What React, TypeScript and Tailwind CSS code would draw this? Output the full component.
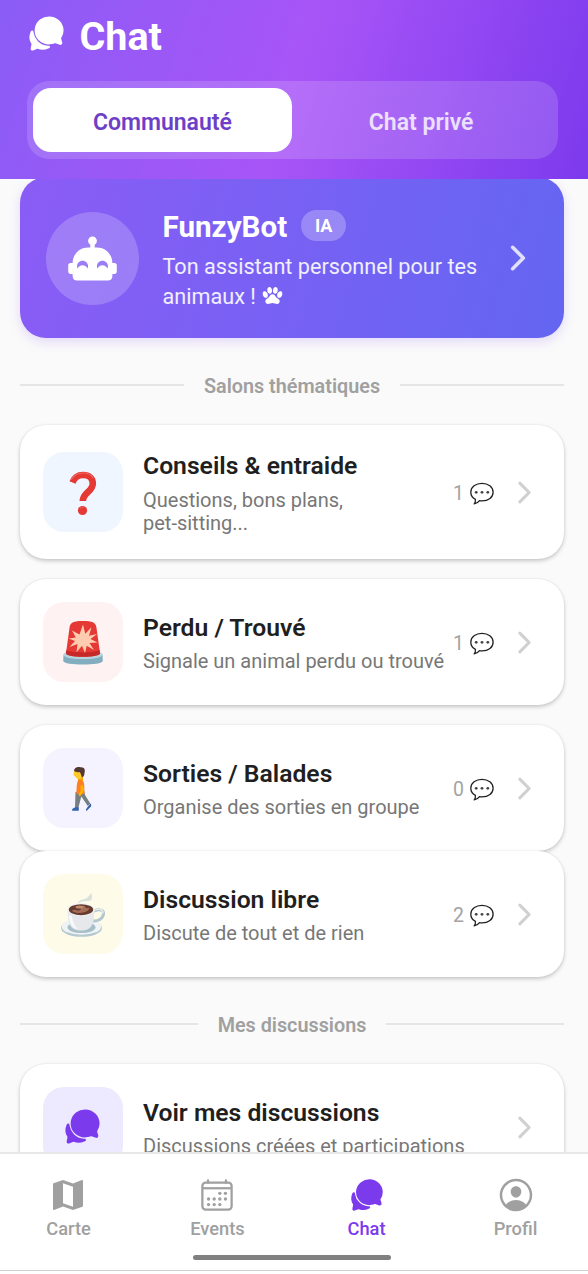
import React, { useState } from "react";
import {
  IoCalendarOutline,
  IoChatbubbles,
  IoChevronForward,
  IoPaw,
  IoPersonCircleOutline,
} from "react-icons/io5";
import { MdMap } from "react-icons/md";

const RobotIcon: React.FC = () => (
  <svg viewBox="0 0 24 24" width="53" height="53" fill="currentColor">
    <path d="M22 14H21C21 10.13 17.87 7 14 7H13V5.73C13.6 5.39 14 4.74 14 4C14 2.9 13.11 2 12 2S10 2.9 10 4C10 4.74 10.4 5.39 11 5.73V7H10C6.13 7 3 10.13 3 14H2C1.45 14 1 14.45 1 15V18C1 18.55 1.45 19 2 19H3V20C3 21.11 3.9 22 5 22H19C20.11 22 21 21.11 21 20V19H22C22.55 19 23 18.55 23 18V15C23 14.45 22.55 14 22 14M9.79 16.5C9.4 15.62 8.53 15 7.5 15S5.6 15.62 5.21 16.5C5.08 16.19 5 15.86 5 15.5C5 14.12 6.12 13 7.5 13S10 14.12 10 15.5C10 15.86 9.92 16.19 9.79 16.5M18.79 16.5C18.4 15.62 17.5 15 16.5 15S14.6 15.62 14.21 16.5C14.08 16.19 14 15.86 14 15.5C14 14.12 15.12 13 16.5 13S19 14.12 19 15.5C19 15.86 18.92 16.19 18.79 16.5Z" />
  </svg>
);

const QuestionIcon: React.FC = () => (
  <svg viewBox="0 0 46 46" width="46" height="46" fill="none">
    <path
      d="M12.500 12.500C14.500 7 18.500 5 23.200 5c6 0 9.600 3.500 9.600 8.500 0 8.500-9.800 8.500-10 17.500"
      stroke="#e53935"
      strokeWidth="6.600"
    />
    <path d="M11.500 9.300C14.500 4.500 18.500 3 23 3c4.500 0 8 1.500 9.800 4.500" stroke="#f2685f" strokeWidth="1.200" strokeLinecap="round" />
    <circle cx="22.500" cy="40.500" r="4.600" fill="#e53935" />
    <path d="M20.200 38.200a3.500 3.500 0 0 1 3-1.200" stroke="#f2685f" strokeWidth="1" strokeLinecap="round" />
  </svg>
);

const SirenIcon: React.FC = () => (
  <svg viewBox="0 0 46 46" width="46" height="46">
    <path d="M3.500 34.500c6-2 33-2 39 0l.3 6.500c-.3 4.800-39.300 4.800-39.600 0z" fill="#82aec0" />
    <path d="M3.500 34.500c0-2.500 5-3.500 19.500-3.500s19.500 1 19.500 3.500S37 39 23 39 3.500 37 3.500 34.500z" fill="#b9d3dc" />
    <path d="M9.500 8C10 2 14 1 23 1s13 1 13.500 7L40 33c0 2.500-7 3.700-17 3.700S6 35.500 6 33z" fill="#e53935" />
    <path d="M6.500 30L6 33c0 2.500 7 3.700 17 3.700S40 35.500 40 33l-.5-3c-3 3-30 3-33 0z" fill="#c62828" />
    <path
      d="M23 4.500l2.300 9.300 6.200-6.500-2.500 8.500 8-1.700-6.500 5 7 3.400-8 .4 4.500 7-7.300-4.200L25 33l-3-7.200-5.500 6.500 1-8.300-8 3 5.500-6-6.500-2.500 7.300-1L12 10.500l7.500 4z"
      fill="#ffccb0"
    />
  </svg>
);

const WalkingIcon: React.FC = () => (
  <svg viewBox="0 0 46 46" width="46" height="46">
    <path d="M15.500 26l-.5 16h3.300l3-11.500 6.500 9.500 2.500-2.500L25 29l-1-5z" fill="#757f82" />
    <path d="M15 41.300h3.800v3.500h-6.500c-.8-2 1.200-2.400 2.700-3.500z" fill="#3464ae" />
    <path d="M28 40.500l2.500-3c1 1.200.8 2 .5 3L26.500 45c-1.300-1-.2-2.200 1.500-4.500z" fill="#3464ae" />
    <path d="M18 11h5v5h-5z" fill="#f2a600" />
    <path d="M14 4.500h7.500v7.700c-2 1.300-4.800 1-5.700-1L13.500 9z" fill="#ffca28" />
    <path d="M14 4.800c0-3.500 4-4.500 6.500-3.500 4-.5 5 2.700 4 5.700 0 2.700-1.300 4.300-2.800 4.300l-1-3.500-1-1.800c-2 .5-4.200.3-5.700-1.200z" fill="#543930" />
    <path d="M18 14.200c4-1.400 6.200 1 6.200 4.800L24.500 28h-8c0-5-.2-9.500 1.500-13.800z" fill="#ff7f22" />
    <path d="M20.500 19.500h2.700l.6 5.500-3.600 5.200-1.800-1 2.200-4.400z" fill="#ffb300" />
  </svg>
);

const CoffeeIcon: React.FC = () => (
  <svg viewBox="0 0 46 46" width="46" height="46">
    <path d="M17.500 11.500c2-5 7.500-3.300 10-6 1.500-1.700 2.500-3 4-4.500.5 4.500 1.500 7-2.500 7.800-4 .8-6.500-.3-11.500 2.700z" fill="#cdd9dd" opacity=".8" />
    <ellipse cx="21.500" cy="36" rx="20.500" ry="8.800" fill="#b6c9d0" />
    <ellipse cx="21.500" cy="34.700" rx="19.800" ry="8" fill="#eef3f5" />
    <ellipse cx="21.500" cy="35.500" rx="14" ry="5.500" fill="#a9bfc8" />
    <path d="M34 19c6-2.500 10-1 9.500 3S39 29.500 32 29" fill="none" stroke="#b4c7ce" strokeWidth="3" />
    <path d="M34 18.500c6-2.500 9.500-1 9 3" fill="none" stroke="#edf2f4" strokeWidth="1.200" />
    <path d="M7.500 17.500C8 30 9 38.500 21 38.500S34 30 34.500 17.500z" fill="#e6e8ec" />
    <path d="M9 23c.7 8 3 13 9 14-4-3-5.500-8-6-13z" fill="#fafbfc" />
    <ellipse cx="21" cy="17.500" rx="13.500" ry="6.500" fill="#f2f4f5" />
    <ellipse cx="21" cy="17.700" rx="12.200" ry="5.500" fill="#673b30" />
    <path d="M12 19c3-3 5 1 8-1s-2-3 2-4 3 3 6 2 1 3-3 4-8 2-13-1z" fill="#a56b53" />
    <ellipse cx="19.500" cy="15" rx="4" ry="1.500" fill="#bc8b70" />
  </svg>
);

const BubbleIcon: React.FC = () => (
  <svg viewBox="0 0 24 24" width="24" height="24" fill="none">
    <path
      d="M12 1.300c6.200 0 11.100 3.700 11.100 8.900S18.500 18.900 12 18.900c-.9 0-1.700-.1-2.500-.2-1.300 1.900-3.200 3-5.300 3.200 1-1.300 1.400-2.900 1.200-4.500C2.500 15.800.8 13.300.8 10.200.8 5 5.800 1.300 12 1.300z"
      stroke="#222"
      strokeWidth="1.300"
      strokeLinejoin="round"
    />
    <circle cx="6.200" cy="10.300" r="1.400" fill="#444" />
    <circle cx="12" cy="10.300" r="1.400" fill="#444" />
    <circle cx="17.800" cy="10.300" r="1.400" fill="#444" />
  </svg>
);

interface RoomCardProps {
  title: string;
  description: string;
  icon: React.ReactNode;
  iconBg: string;
  count?: number;
  className?: string;
}

const RoomCard: React.FC<RoomCardProps> = ({ title, description, icon, iconBg, count, className = "" }) => (
  <div
    className={`flex shrink-0 items-center rounded-[26px] bg-white pl-[23px] pr-[23.5px] shadow-[0_2px_4px_rgba(0,0,0,0.2),0_0_2px_rgba(0,0,0,0.08)] ${className}`}
  >
    <div className={`flex size-20 shrink-0 items-center justify-center rounded-[21px] pt-px ${iconBg}`}>{icon}</div>
    <div className="ml-5 min-w-0 flex-1 whitespace-pre">
      <h3 className="text-[24.7px] leading-[32px] font-semibold text-[#1f1f1f]">{title}</h3>
      <p className="mt-[6.5px] -mb-[1.5px] text-[20px] leading-[23.5px] text-[#777]">{description}</p>
    </div>
    {count !== undefined && (
      <div className="mr-[13.5px] flex items-center gap-[6px] pt-[3px] text-[19.5px] text-[#a3a3a3]">
        <span>{count}</span>
        <BubbleIcon />
      </div>
    )}
    <IoChevronForward className="size-[33px] shrink-0 text-[#d0d0d0]" />
  </div>
);

const Divider: React.FC<{ label: string; className?: string }> = ({ label, className = "" }) => (
  <div className={`flex shrink-0 items-center gap-5 ${className}`}>
    <div className="-mt-[2px] h-[2px] flex-1 bg-[#e5e5e5]" />
    <span className="-mb-px pt-px text-[19.8px] leading-6 font-semibold text-[#a0a0a0]">{label}</span>
    <div className="-mt-[2px] h-[2px] flex-1 bg-[#e5e5e5]" />
  </div>
);

const tabs = [
  { label: "Carte", icon: <MdMap className="mr-px size-10" /> },
  { label: "Events", icon: <IoCalendarOutline className="mr-px size-9" /> },
  { label: "Chat", icon: <IoChatbubbles className="size-9" /> },
  { label: "Profil", icon: <IoPersonCircleOutline className="size-10" /> },
];

const App: React.FC = () => {
  const [mode, setMode] = useState("Communauté");

  return (
    <div className="flex h-[1274px] w-[588px] flex-col overflow-hidden bg-[#fafafa] font-[Roboto,sans-serif]">
      <header className="relative z-10 h-[179px] shrink-0 bg-[linear-gradient(107deg,#8b5cf6_0%,#a855f7_50%,#7c3aed_100%)] px-[26.5px]">
        <div className="flex h-[81px] items-start gap-[14px] pt-[14px] text-white">
          <IoChatbubbles className="size-[39px]" />
          <h1 className="text-[39.5px] leading-[46px] font-bold">Chat</h1>
        </div>
        <div className="flex h-[78px] w-[531px] rounded-[22px] bg-white/15 p-[7px] pl-[6.5px]">
          {["Communauté", "Chat privé"].map((label) => (
            <button
              key={label}
              onClick={() => setMode(label)}
              className={`flex-1 rounded-[18px] pt-[6px] text-[23px] font-semibold ${
                mode === label ? "bg-white text-[#6d3fc8]" : "text-white/80"
              }`}
            >
              {label}
            </button>
          ))}
        </div>
      </header>

      <main className="-mt-[2px] flex min-h-0 flex-1 flex-col overflow-hidden pr-6 pl-5">
        <section className="flex h-[161px] shrink-0 items-center rounded-[26px] bg-[linear-gradient(106deg,#8b5cf6_0%,#6366f1_100%)] pt-[2px] pr-[27.5px] pl-[26px] text-white shadow-[0_4px_12px_rgba(139,92,246,0.2)]">
          <div className="flex size-[93px] shrink-0 items-center justify-center rounded-full bg-white/20">
            <RobotIcon />
          </div>
          <div className="ml-[23.5px] min-w-0 flex-1 pt-[4px] whitespace-pre">
            <div className="flex items-center gap-[14px]">
              <h2 className="text-[29.6px] leading-[36px] font-bold">FunzyBot</h2>
              <span className="-mt-[4px] flex h-[31px] w-[45px] items-center justify-center rounded-full bg-white/25 text-[18px] font-bold">
                IA
              </span>
            </div>
            <p className="mt-[7px] text-[21.650px] leading-[30px] text-white/90">
              {"Ton assistant personnel pour tes\nanimaux ! "}
              <IoPaw className="ml-px inline size-[21px] align-[-2px] text-white" />
            </p>
          </div>
          <IoChevronForward className="mb-[2px] size-[38px] shrink-0 text-white/80" />
        </section>

        <Divider label="Salons thématiques" className="mt-9" />

        <RoomCard
          title="Conseils & entraide"
          description={"Questions, bons plans,\npet-sitting..."}
          icon={<QuestionIcon />}
          iconBg="bg-[#eff6ff]"
          count={1}
          className="mt-[27px] h-[134px]"
        />
        <RoomCard
          title="Perdu / Trouvé"
          description="Signale un animal perdu ou trouvé"
          icon={<SirenIcon />}
          iconBg="bg-[#fef2f2]"
          count={1}
          className="mt-5 h-[126px]"
        />
        <RoomCard
          title="Sorties / Balades"
          description="Organise des sorties en groupe"
          icon={<WalkingIcon />}
          iconBg="bg-[#f5f3ff]"
          count={0}
          className="mt-5 h-[126px]"
        />
        <RoomCard
          title="Discussion libre"
          description="Discute de tout et de rien"
          icon={<CoffeeIcon />}
          iconBg="bg-[#fefce8]"
          count={2}
          className="h-[126px]"
        />

        <Divider label="Mes discussions" className="mt-9" />

        <RoomCard
          title="Voir mes discussions"
          description="Discussions créées et participations"
          icon={<IoChatbubbles className="mr-px mb-[2px] size-[39px] text-[#7c3aed]" />}
          iconBg="bg-[#ede9fe]"
          className="mt-[27px] h-[126px]"
        />
      </main>

      <nav className="relative z-10 h-[119px] shrink-0 border-t-2 border-b border-[#e8e8e8] border-b-[#cfcfcf] bg-white">
        <div className="flex justify-between pt-[21px] pr-[22.5px] pl-[18.5px]">
          {tabs.map((tab) => (
            <a
              key={tab.label}
              className={`flex w-[100px] flex-col items-center gap-[2px] text-[18.3px] leading-6 font-medium ${
                tab.label === "Chat" ? "text-[#7c3aed]" : "text-[#a0a0a0]"
              }`}
            >
              <span className="flex h-10 items-center">{tab.icon}</span>
              {tab.label}
            </a>
          ))}
        </div>
        <div className="mt-[14px] ml-[193px] h-[5px] w-[198px] rounded-full bg-[#808080]" />
      </nav>
      <div className="h-[3px] shrink-0 bg-white" />
    </div>
  );
};

export default App;
